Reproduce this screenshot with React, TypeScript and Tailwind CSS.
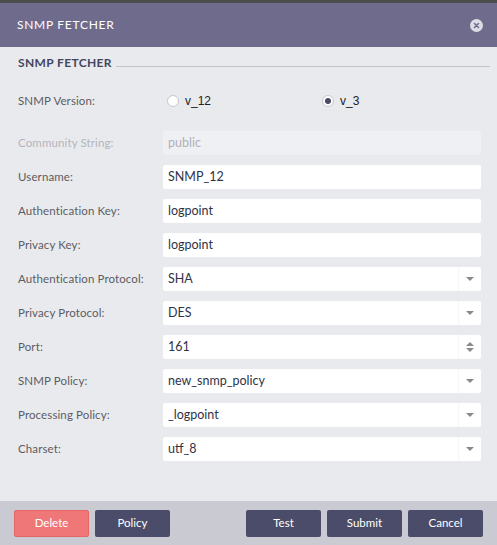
import React from "react";

const Caret = () => (
  <svg width="10" height="6" viewBox="0 0 10 6"><path d="M1 1h8L5 5z" fill="#8a8a8a" /></svg>
);

const Spinner = () => (
  <svg width="10" height="14" viewBox="0 0 10 14"><path d="M1 6h8L5 2z" fill="#8a8a8a" /><path d="M1 8h8L5 12z" fill="#8a8a8a" /></svg>
);

function Row({ label, children, muted }: { label: string; children: React.ReactNode; muted?: boolean }) {
  return (
    <div className="flex items-center h-[24px]">
      <div className={`w-[145px] shrink-0 text-[11.5px] tracking-[0.01em] ${muted ? "text-[#b4b5bb]" : "text-[#5c5c62]"}`}>{label}</div>
      <div className="flex-1">{children}</div>
    </div>
  );
}

function Field({ value, kind, disabled }: { value: string; kind?: "select" | "spin"; disabled?: boolean }) {
  return (
    <div className={`h-[24px] flex items-center rounded-[2px] ${disabled ? "bg-[#eff0f4] text-[#b0b1b8]" : "bg-white text-[#2f3347]"}`}>
      <div className="flex-1 pl-[5px] text-[12.5px]">{value}</div>
      {kind && (
        <div className="w-[23px] h-full flex items-center justify-center border-l border-[#f6f6f8]">
          {kind === "select" ? <Caret /> : <Spinner />}
        </div>
      )}
    </div>
  );
}

function Btn({ label, danger }: { label: string; danger?: boolean }) {
  return (
    <button
      className={`w-[75px] h-[27px] rounded-[2px] text-[11.5px] text-white ${danger ? "bg-[#ef7777] border border-[#e86565]" : "bg-[#4a4c69]"}`}
    >
      {label}
    </button>
  );
}

export default function App() {
  return (
    <div className="w-[497px] h-[545px] flex flex-col bg-[#e9eaee]" style={{ fontFamily: "Lato, 'Noto Sans', sans-serif" }}>
      <div className="h-[3px] bg-[#4d4d50]" />
      <div className="h-[44px] bg-[#6f6b8c] flex items-center justify-between pl-[17px] pr-[14px]">
        <div className="text-white text-[12px] tracking-[0.06em]">SNMP FETCHER</div>
        <div className="w-[13px] h-[13px] rounded-full bg-[#dcdce4] flex items-center justify-center">
          <svg width="7" height="7" viewBox="0 0 7 7"><path d="M1.5 1.5l4 4M5.5 1.5l-4 4" stroke="#6f6b8c" strokeWidth="1.6" strokeLinecap="round" /></svg>
        </div>
      </div>
      <div className="flex-1 flex flex-col pl-[18px] pr-[16px] pt-[9px]">
        <div className="flex items-center h-[14px]">
          <div className="text-[12px] font-bold text-[#434660] tracking-[0.03em]">SNMP FETCHER</div>
          <div className="flex-1 h-px bg-[#c3c3ca] ml-[4px] mt-[6px] mr-[-9px]" />
        </div>
        <div className="mt-[19px] flex flex-col gap-[10px]">
          <div className="flex items-center h-[24px] mb-[8px]">
            <div className="w-[149px] shrink-0 text-[11.5px] tracking-[0.01em] text-[#5c5c62]">SNMP Version:</div>
            <div className="flex items-center w-[155px]" style={{ fontFamily: "'Liberation Sans', Arial, sans-serif" }}>
              <span className="w-[12px] h-[12px] rounded-full bg-white border border-[#c8c8cc]" />
              <span className="ml-[6px] text-[12px] text-[#222]">v_12</span>
            </div>
            <div className="flex items-center" style={{ fontFamily: "'Liberation Sans', Arial, sans-serif" }}>
              <span className="w-[12px] h-[12px] rounded-full bg-white border border-[#c8c8cc] flex items-center justify-center">
                <span className="w-[6px] h-[6px] rounded-full bg-[#4a4c69]" />
              </span>
              <span className="ml-[6px] text-[12px] text-[#222]">v_3</span>
            </div>
          </div>
          <Row label="Community String:" muted><Field value="public" disabled /></Row>
          <Row label="Username:"><Field value="SNMP_12" /></Row>
          <Row label="Authentication Key:"><Field value="logpoint" /></Row>
          <Row label="Privacy Key:"><Field value="logpoint" /></Row>
          <Row label="Authentication Protocol:"><Field value="SHA" kind="select" /></Row>
          <Row label="Privacy Protocol:"><Field value="DES" kind="select" /></Row>
          <Row label="Port:"><Field value="161" kind="spin" /></Row>
          <Row label="SNMP Policy:"><Field value="new_snmp_policy" kind="select" /></Row>
          <Row label="Processing Policy:"><Field value="_logpoint" kind="select" /></Row>
          <Row label="Charset:"><Field value="utf_8" kind="select" /></Row>
        </div>
      </div>
      <div className="h-[44px] bg-[#cacad3] flex items-center px-[14px]">
        <div className="flex gap-[6px]">
          <Btn label="Delete" danger />
          <Btn label="Policy" />
        </div>
        <div className="flex-1" />
        <div className="flex gap-[6px]">
          <Btn label="Test" />
          <Btn label="Submit" />
          <Btn label="Cancel" />
        </div>
      </div>
    </div>
  );
}
